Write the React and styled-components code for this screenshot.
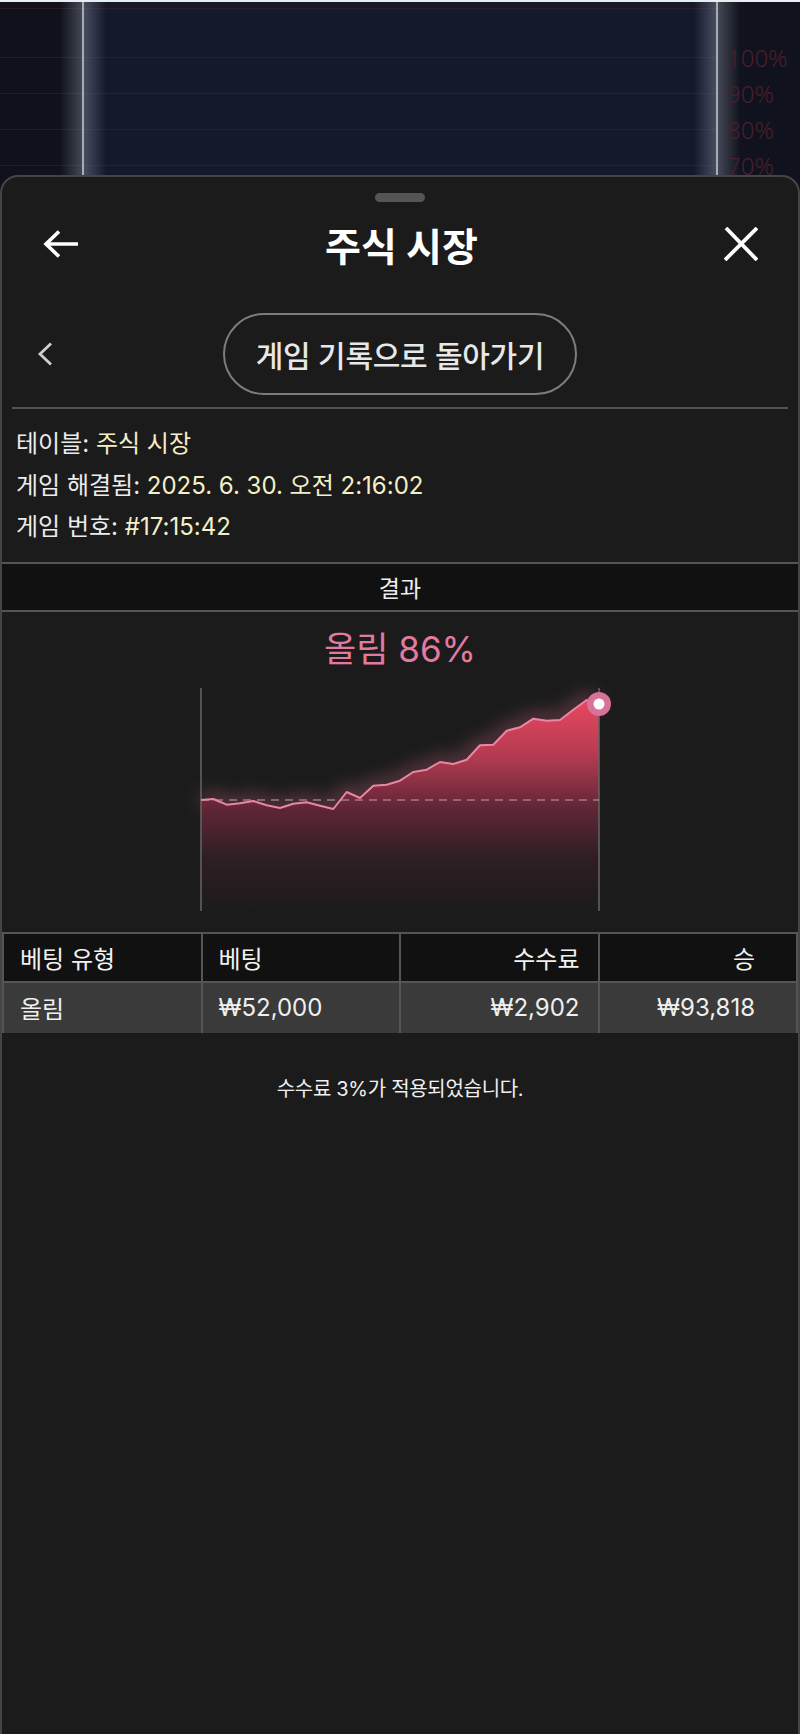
import React from "react";
import styled, { createGlobalStyle } from "styled-components";

const FONT = `Inter, "Noto Sans CJK KR", "Noto Sans", sans-serif`;

const Global = createGlobalStyle`
  html, body { margin: 0; padding: 0; background: #0f121b; }
  body { font-family: ${FONT}; overflow-x: hidden; }
  * { box-sizing: border-box; }
`;

const Page = styled.div`
  width: 800px;
  height: 1734px;
  overflow: hidden;
`;

const Backdrop = styled.div`
  height: 195px;
  border-top: 2px solid #ececf0;
  display: grid;
  grid-template-columns: 82px 636px 82px;
`;

const gridLines = `repeating-linear-gradient(to bottom, transparent 0, transparent 35px, rgba(92, 34, 52, 0.35) 35px, rgba(92, 34, 52, 0.35) 36px)`;

const SideLeft = styled.div`
  background:
    linear-gradient(to right, transparent calc(100% - 22px), rgba(190, 196, 215, 0.3)),
    ${gridLines},
    #0f121b;
  background-position: 0 0, 0 20px, 0 0;
`;

const Center = styled.div`
  border-left: 2px solid #a9abb4;
  border-right: 2px solid #a9abb4;
  background:
    linear-gradient(to right, rgba(190, 196, 215, 0.3), transparent 22px, transparent calc(100% - 22px), rgba(190, 196, 215, 0.3)),
    ${gridLines},
    #141a2b;
  background-position: 0 0, 0 20px, 0 0;
`;

const SideRight = styled.div`
  background:
    linear-gradient(to right, rgba(190, 196, 215, 0.3), transparent 22px),
    #10131d;
  padding: 38px 0 0 9px;
  display: flex;
  flex-direction: column;
  align-items: flex-start;
`;

const PctLabel = styled.span`
  font-family: "Noto Sans", sans-serif;
  font-weight: 300;
  font-size: 24px;
  line-height: 36px;
  white-space: nowrap;
  color: #4a1f2e;
`;

const Sheet = styled.div`
  position: relative;
  z-index: 1;
  margin-top: -20px;
  min-height: 1559px;
  background: #1b1b1b;
  border: 2px solid #454545;
  border-bottom: none;
  border-radius: 18px 18px 0 0;
  display: flex;
  flex-direction: column;
`;

const Handle = styled.div`
  align-self: center;
  width: 50px;
  height: 9px;
  border-radius: 5px;
  background: #555;
  margin-top: 16px;
`;

const Header = styled.div`
  height: 68px;
  margin-top: 8px;
  padding: 0 40px 0 41px;
  display: flex;
  align-items: center;
  justify-content: space-between;
`;

const IconButton = styled.button`
  background: none;
  border: none;
  padding: 0;
  margin: 0;
  width: ${(p) => p.$w}px;
  height: ${(p) => p.$h}px;
  display: flex;
  align-items: center;
  justify-content: center;
  color: ${(p) => p.$color || "#fff"};
  cursor: pointer;
`;

const Title = styled.h1`
  margin: 0;
  font-size: 39px;
  font-weight: 700;
  color: #fff;
  letter-spacing: 0;
`;

const NavRow = styled.div`
  margin-top: 35px;
  display: grid;
  grid-template-columns: 1fr auto 1fr;
  align-items: center;
`;

const ChevronSlot = styled.div`
  padding-left: 35px;
  display: flex;
`;

const PillButton = styled.button`
  width: 354px;
  height: 82px;
  border-radius: 41px;
  border: 2px solid #7d7d7d;
  background: transparent;
  color: #e8e8e8;
  font-family: ${FONT};
  font-size: 30px;
  font-weight: 500;
  letter-spacing: -0.3px;
`;

const Divider = styled.hr`
  margin: 12px 10px 0;
  border: none;
  height: 2px;
  background: #515151;
`;

const Info = styled.div`
  padding: 14px 14px 14px;
  display: flex;
  flex-direction: column;
`;

const InfoLine = styled.div`
  font-size: 24px;
  line-height: 41.5px;
  color: #ececec;
`;

const InfoValue = styled.span`
  color: #f4efc7;
`;

const SectionBar = styled.div`
  height: 50px;
  background: #111;
  border-top: 2px solid #555;
  border-bottom: 2px solid #555;
  display: flex;
  align-items: center;
  justify-content: center;
  font-size: 23px;
  color: #eee;
`;

const ChartSection = styled.div`
  padding: 17px 0 21px;
  display: flex;
  flex-direction: column;
  align-items: center;
  gap: 19px;
`;

const ResultTitle = styled.div`
  font-size: 35px;
  line-height: 40px;
  color: #e27aa0;
`;

const ChartSvg = styled.svg`
  display: block;
  overflow: visible;
`;

const Table = styled.table`
  width: 100%;
  border-collapse: collapse;
  table-layout: fixed;
  font-size: 24px;
`;

const Th = styled.th`
  height: 49px;
  background: #111;
  color: #f2f2f2;
  font-weight: 400;
  border: 2px solid #555;
  text-align: ${(p) => p.$align || "left"};
  padding: 0 ${(p) => p.$pr || 16}px 0 16px;
`;

const Td = styled.td`
  height: 51px;
  background: #3a3a3a;
  color: #efefef;
  border: 2px solid #555;
  border-top: none;
  border-bottom: none;
  text-align: ${(p) => p.$align || "left"};
  padding: 0 ${(p) => p.$pr || 16}px 0 16px;
`;

const Note = styled.p`
  margin: 44px 0 0;
  text-align: center;
  font-size: 20px;
  line-height: 24px;
  color: #f0f0f0;
  letter-spacing: -0.3px;
`;

const pts = [
  [0, 112], [12.3, 111], [25.7, 116.7], [39, 115.3], [52.3, 113], [65.7, 117.3],
  [79, 120], [92.3, 115.7], [105.7, 114.3], [119, 117.7], [132.3, 121], [145.7, 104],
  [159, 110], [172.3, 97.7], [185.7, 96.7], [199, 92.7], [212.3, 84], [225.7, 81.7],
  [239, 74], [252.3, 76], [265.7, 71.7], [279, 57.3], [292.3, 56.7], [305.7, 42.7],
  [319, 39.3], [332.3, 30.7], [345.7, 32.7], [359, 32], [372.3, 21.7], [385.7, 12],
  [398, 16],
];

function Chart() {
  const W = 398;
  const H = 223;
  const line = pts.map((p, i) => `${i ? "L" : "M"}${p[0]} ${p[1]}`).join(" ");
  const area = `${line} L${W} ${H} L0 ${H} Z`;
  return (
    <ChartSvg width={W} height={H} viewBox={`0 0 ${W} ${H}`}>
      <defs>
        <linearGradient id="fillG" x1="0" y1="0" x2="0" y2="1">
          <stop offset="0" stopColor="#e8485f" />
          <stop offset="0.28" stopColor="#b03a50" />
          <stop offset="0.52" stopColor="#5e2535" />
          <stop offset="0.75" stopColor="#2e1e23" />
          <stop offset="1" stopColor="#1c1b1b" />
        </linearGradient>
        <filter id="glow" x="-10%" y="-40%" width="120%" height="180%">
          <feGaussianBlur stdDeviation="9" />
        </filter>
      </defs>
      <path d={line} fill="none" stroke="#e2708f" strokeOpacity="0.4" strokeWidth="12" filter="url(#glow)" />
      <path d={area} fill="url(#fillG)" />
      <line x1="0" y1="0" x2="0" y2={H} stroke="#666" strokeWidth="1.5" />
      <line x1={W} y1="0" x2={W} y2={H} stroke="#666" strokeWidth="1.5" />
      <line x1="0" y1="112" x2={W} y2="112" stroke="#b9a0a8" strokeOpacity="0.7" strokeWidth="1.5" strokeDasharray="8 6" />
      <path d={line} fill="none" stroke="#ea86a3" strokeWidth="2" strokeLinejoin="round" />
      <circle cx={W} cy="16" r="12" fill="#d8729a" />
      <circle cx={W} cy="16" r="5.5" fill="#fff" />
    </ChartSvg>
  );
}

export default function App() {
  return (
    <Page>
      <Global />
      <Backdrop>
        <SideLeft />
        <Center />
        <SideRight>
          <PctLabel>100%</PctLabel>
          <PctLabel>90%</PctLabel>
          <PctLabel>80%</PctLabel>
          <PctLabel>70%</PctLabel>
        </SideRight>
      </Backdrop>
      <Sheet>
        <Handle />
        <Header>
          <IconButton $w={36} $h={28} aria-label="뒤로">
            <svg width="36" height="28" viewBox="0 0 36 28" fill="none">
              <path d="M35 14H3.5M16 1.5L3 14l13 12.5" stroke="currentColor" strokeWidth="3.6" />
            </svg>
          </IconButton>
          <Title>주식 시장</Title>
          <IconButton $w={34} $h={34} aria-label="닫기">
            <svg width="34" height="34" viewBox="0 0 34 34" fill="none">
              <path d="M2 1L33 33M33 1L1 33" stroke="currentColor" strokeWidth="3.8" />
            </svg>
          </IconButton>
        </Header>
        <NavRow>
          <ChevronSlot>
            <IconButton $w={16} $h={24} $color="#cfcfcf" aria-label="이전">
              <svg width="16" height="24" viewBox="0 0 16 24" fill="none">
                <path d="M14 1.5L3 12l11 10.5" stroke="currentColor" strokeWidth="2.8" />
              </svg>
            </IconButton>
          </ChevronSlot>
          <PillButton>게임 기록으로 돌아가기</PillButton>
          <span />
        </NavRow>
        <Divider />
        <Info>
          <InfoLine>테이블: <InfoValue>주식 시장</InfoValue></InfoLine>
          <InfoLine>게임 해결됨: <InfoValue>2025. 6. 30. 오전 2:16:02</InfoValue></InfoLine>
          <InfoLine>게임 번호: <InfoValue>#17:15:42</InfoValue></InfoLine>
        </Info>
        <SectionBar>결과</SectionBar>
        <ChartSection>
          <ResultTitle>올림 86%</ResultTitle>
          <Chart />
        </ChartSection>
        <Table>
          <thead>
            <tr>
              <Th>베팅 유형</Th>
              <Th>베팅</Th>
              <Th $align="right" $pr={18}>수수료</Th>
              <Th $align="right" $pr={41}>승</Th>
            </tr>
          </thead>
          <tbody>
            <tr>
              <Td>올림</Td>
              <Td>₩52,000</Td>
              <Td $align="right" $pr={18}>₩2,902</Td>
              <Td $align="right" $pr={41}>₩93,818</Td>
            </tr>
          </tbody>
        </Table>
        <Note>수수료 3%가 적용되었습니다.</Note>
      </Sheet>
    </Page>
  );
}
